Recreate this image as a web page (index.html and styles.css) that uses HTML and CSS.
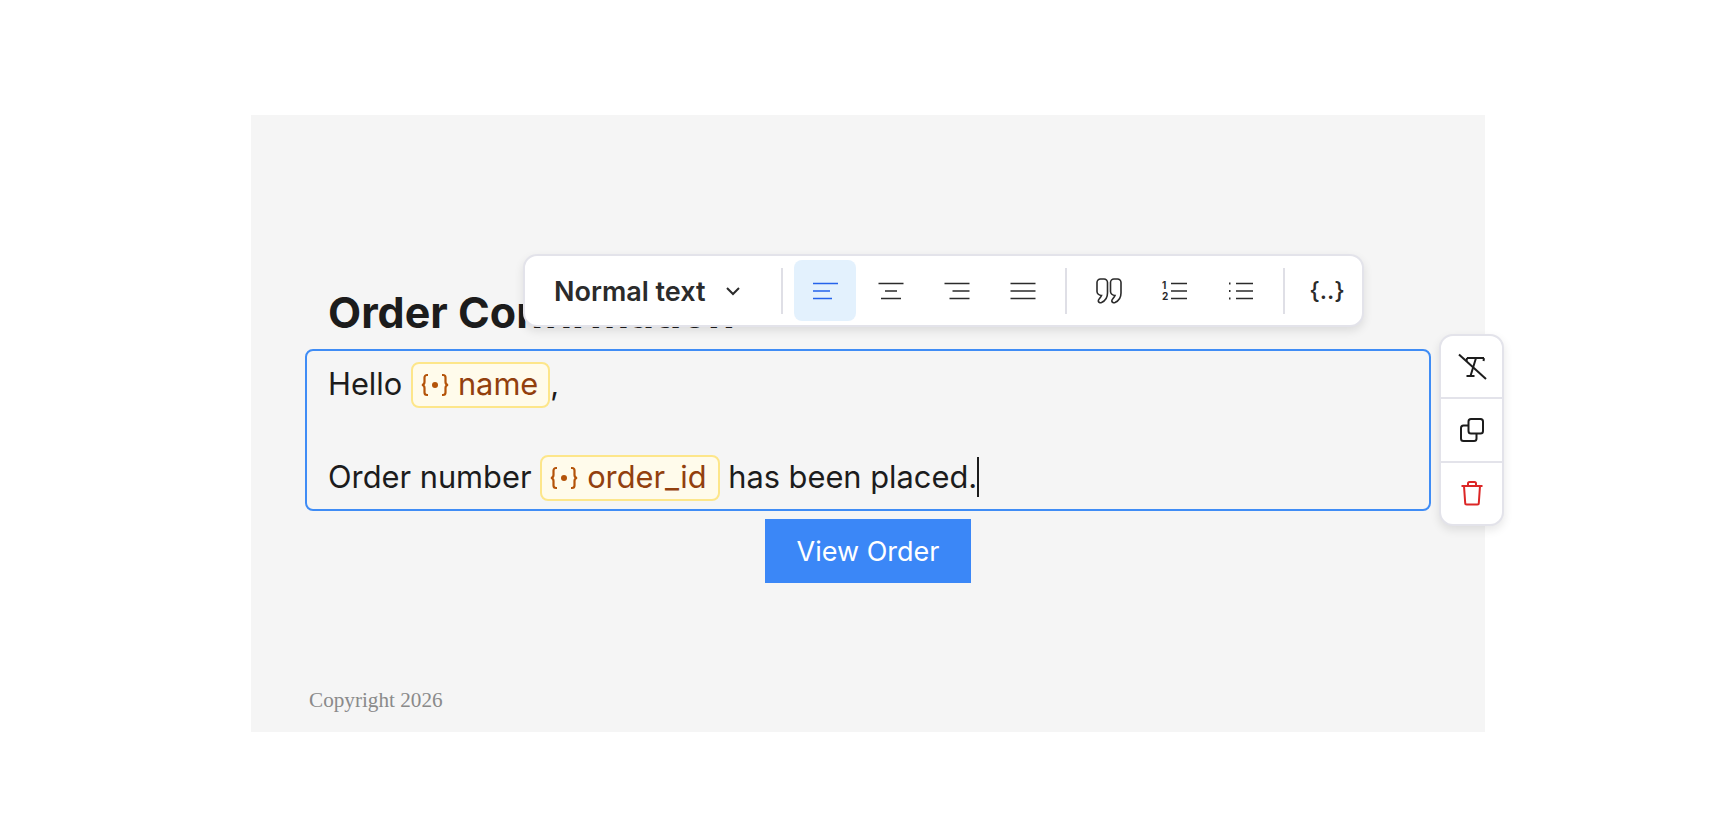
FILE: index.html
```html
<!DOCTYPE html>
<html lang="en">
<head>
    <meta charset="UTF-8">
    <title>Order Confirmation</title>
    <link rel="stylesheet" href="styles.css">
</head>
<body>
    <div class="panel">
        <h1 class="title">Order Confirmation</h1>

        <div class="editor">
            <p class="line">Hello <span class="chip"><svg class="chip-icon" viewBox="0 0 28 24"><path d="M7 2H6a2.5 2.5 0 0 0-2.5 2.500V9A3 3 0 0 1 1 12a3 3 0 0 1 2.500 3v4.500A2.500 2.500 0 0 0 6 22h1M21 2h1a2.500 2.500 0 0 1 2.500 2.500V9a3 3 0 0 0 2.500 3 3 3 0 0 0-2.500 3v4.500A2.500 2.500 0 0 1 22 22h-1"/><circle cx="14" cy="12" r="3"/></svg>name</span>,</p>
            <p class="line"><br></p>
            <p class="line">Order number <span class="chip chip-wide"><svg class="chip-icon" viewBox="0 0 28 24"><path d="M7 2H6a2.5 2.5 0 0 0-2.5 2.500V9A3 3 0 0 1 1 12a3 3 0 0 1 2.500 3v4.500A2.500 2.500 0 0 0 6 22h1M21 2h1a2.500 2.500 0 0 1 2.500 2.500V9a3 3 0 0 0 2.500 3 3 3 0 0 0-2.500 3v4.500A2.500 2.500 0 0 1 22 22h-1"/><circle cx="14" cy="12" r="3"/></svg>order_id</span> has been placed.<span class="caret"></span></p>
        </div>

        <a class="cta" href="#">View Order</a>

        <p class="copyright">Copyright 2026</p>

        <div class="toolbar">
            <button class="select">Normal text
                <svg class="chevron" viewBox="0 0 16 10"><path d="M2 2l6 6 6-6"/></svg>
            </button>
            <span class="sep"></span>
            <button class="tool active"><svg class="icon" viewBox="0 0 26 26"><path d="M1 5.500h25M1 13h17M1 20.500h19"/></svg></button>
            <button class="tool"><svg class="icon" viewBox="0 0 26 26"><path d="M.5 5.500h25M7 13h12M3 20.500h20"/></svg></button>
            <button class="tool"><svg class="icon" viewBox="0 0 26 26"><path d="M.5 5.500h25M8.500 13h17M5.500 20.500h20"/></svg></button>
            <button class="tool"><svg class="icon" viewBox="0 0 26 26"><path d="M.5 5.500h25M.5 13h25M.5 20.500h25"/></svg></button>
            <span class="sep"></span>
            <button class="tool"><svg class="icon" viewBox="0 0 26 26"><path d="M4.500 1H8a3.500 3.500 0 0 1 3.500 3.500V15c0 4.500-2.500 8-6 9.500-1.500.6-3-.3-3.200-1.500-.2-1.500 2.200-2.800 3.200-5.500C3 17.500 1 15.500 1 13.500v-9A3.500 3.500 0 0 1 4.500 1z"/><path d="M18 1h3.500A3.500 3.500 0 0 1 25 4.500V15c0 4.500-2.500 8-6 9.500-1.500.6-3-.3-3.200-1.500-.2-1.500 2.200-2.800 3.200-5.500-2.500 0-4.500-2-4.500-4v-9A3.500 3.500 0 0 1 18 1z"/></svg></button>
            <button class="tool"><svg class="icon" viewBox="0 0 26 26"><text class="icon-num" x="0" y="11">1</text><text class="icon-num" x="0" y="22">2</text><path d="M9 5.500h16M9 13h16M9 20.500h16"/></svg></button>
            <button class="tool"><svg class="icon" viewBox="0 0 26 26"><path class="dots" d="M1 5.500h1.500M1 13h1.500M1 20.500h1.500"/><path d="M8 5.500h17M8 13h17M8 20.500h17"/></svg></button>
            <span class="sep"></span>
            <button class="tool var-tool">{..}</button>
        </div>

        <div class="side-menu">
            <button class="side-item"><svg class="icon side-icon clear-icon" viewBox="0 0 30 28"><path d="M10 5h17M19 5l-5.500 18M9.500 23h8M10 5l-.5 3M27 5l-.5 3"/><path d="M2 1.500L29 26"/></svg></button>
            <button class="side-item"><svg class="icon side-icon" viewBox="0 0 26 26"><rect x="9.500" y="2" width="14.500" height="14.500" rx="2.500"/><path d="M9 8.500H4.500A2.500 2.500 0 0 0 2 11v10.500A2.500 2.500 0 0 0 4.500 24H15a2.500 2.500 0 0 0 2.500-2.500V17"/></svg></button>
            <button class="side-item"><svg class="icon side-icon trash" viewBox="0 0 24 26"><path d="M1.500 6h21M8 6V3.500A1.500 1.500 0 0 1 9.500 2h5A1.500 1.500 0 0 1 16 3.500V6M4 6l1.200 17a1.500 1.500 0 0 0 1.500 1.500h10.600a1.500 1.500 0 0 0 1.500-1.500L20 6"/></svg></button>
        </div>
    </div>
</body>
</html>
```

FILE: styles.css
```css
body {
    margin: 0;
    background-color: white;
    font-family: Inter, "Liberation Sans", sans-serif;
    color: #1c1c1c;
}
p {
    margin: 0;
}
button {
    border: none;
    background: none;
    padding: 0;
    font-family: inherit;
}
.panel {
    position: relative;
    box-sizing: border-box;
    width: 1234px;
    height: 617px;
    margin: 115px 0 0 251px;
    padding-top: 166px;
    background-color: #f5f5f5;
    display: flex;
    flex-direction: column;
}
.title {
    margin: 0 0 0 77px;
    height: 68px;
    font-size: 43px;
    line-height: 62px;
    font-weight: 700;
}
.editor {
    box-sizing: border-box;
    width: 1126px;
    height: 162px;
    margin: 0 auto;
    padding: 9.500px 21px;
    border: 2px solid #3f8cf5;
    border-radius: 8px;
    font-size: 30.800px;
    line-height: 46.500px;
}
.line {
    height: 46.500px;
    white-space: nowrap;
}
.chip {
    display: inline-flex;
    align-items: center;
    gap: 9px;
    box-sizing: border-box;
    height: 46px;
    margin-top: 1px;
    padding: 0 10px 0 8px;
    vertical-align: top;
    background-color: #fffbeb;
    border: 2px solid #fde68a;
    border-radius: 8px;
    color: #92400e;
}
.chip-wide {
    padding-right: 11px;
}
.chip-icon {
    width: 28px;
    height: 24px;
    fill: none;
    stroke: #b45309;
    stroke-width: 2.200;
}
.chip-icon circle {
    fill: #b45309;
    stroke: none;
}
.caret {
    display: inline-block;
    width: 2px;
    height: 40px;
    vertical-align: -9px;
    background-color: #1c1c1c;
}
.cta {
    align-self: center;
    width: 206px;
    height: 64px;
    margin-top: 8px;
    background-color: #3b87f7;
    color: white;
    font-size: 27px;
    line-height: 66px;
    text-align: center;
    text-decoration: none;
}
.copyright {
    margin: 105px 0 0 58px;
    font-family: "Liberation Serif", serif;
    font-size: 21.200px;
    color: #8a8a8a;
}
.toolbar {
    position: absolute;
    left: 272px;
    top: 139px;
    box-sizing: border-box;
    width: 841px;
    height: 73px;
    padding: 4px 4px 4px 5px;
    display: flex;
    align-items: center;
    gap: 4px;
    background-color: white;
    border: 2px solid #e3e3ea;
    border-radius: 14px;
    box-shadow: 0 4px 10px rgba(0, 0, 0, 0.1);
}
.select {
    width: 248px;
    padding-top: 1px;
    padding-left: 24px;
    display: flex;
    align-items: center;
    font-size: 27px;
    font-weight: 600;
    color: #2b2b2b;
    white-space: nowrap;
}
.chevron {
    width: 16px;
    height: 10px;
    margin-left: 19px;
    fill: none;
    stroke: #2b2b2b;
    stroke-width: 2;
}
.sep {
    width: 2px;
    height: 46px;
    margin: 0 7px;
    background-color: #dfdfe6;
}
.tool {
    width: 62px;
    height: 61px;
    flex: none;
    display: flex;
    align-items: center;
    justify-content: center;
    border-radius: 8px;
    color: #2b2b2b;
}
.tool.active {
    background-color: #e3f1fd;
}
.icon {
    width: 26px;
    height: 26px;
    fill: none;
    stroke: #2b2b2b;
    stroke-width: 1.600;
}
.active .icon {
    stroke: #2563eb;
}
.icon-num {
    font-family: Inter, sans-serif;
    font-size: 10px;
    font-weight: 700;
    fill: #2b2b2b;
    stroke: none;
}
.dots {
    stroke-width: 2;
}
.var-tool {
    font-size: 24px;
    font-weight: 500;
}
.side-menu {
    position: absolute;
    left: 1188px;
    top: 219px;
    box-sizing: border-box;
    width: 65px;
    height: 192px;
    display: flex;
    flex-direction: column;
    background-color: white;
    border: 2px solid #e3e3ea;
    border-radius: 14px;
    box-shadow: 0 4px 10px rgba(0, 0, 0, 0.1);
}
.side-item {
    flex: 1;
    display: flex;
    align-items: center;
    justify-content: center;
    border-bottom: 2px solid #e3e3ea;
}
.side-item:last-child {
    border-bottom: none;
}
.side-icon {
    stroke: #1c1c1c;
    stroke-width: 2;
}
.clear-icon {
    width: 30px;
    height: 28px;
}
.trash {
    stroke: #dc2626;
}
```
